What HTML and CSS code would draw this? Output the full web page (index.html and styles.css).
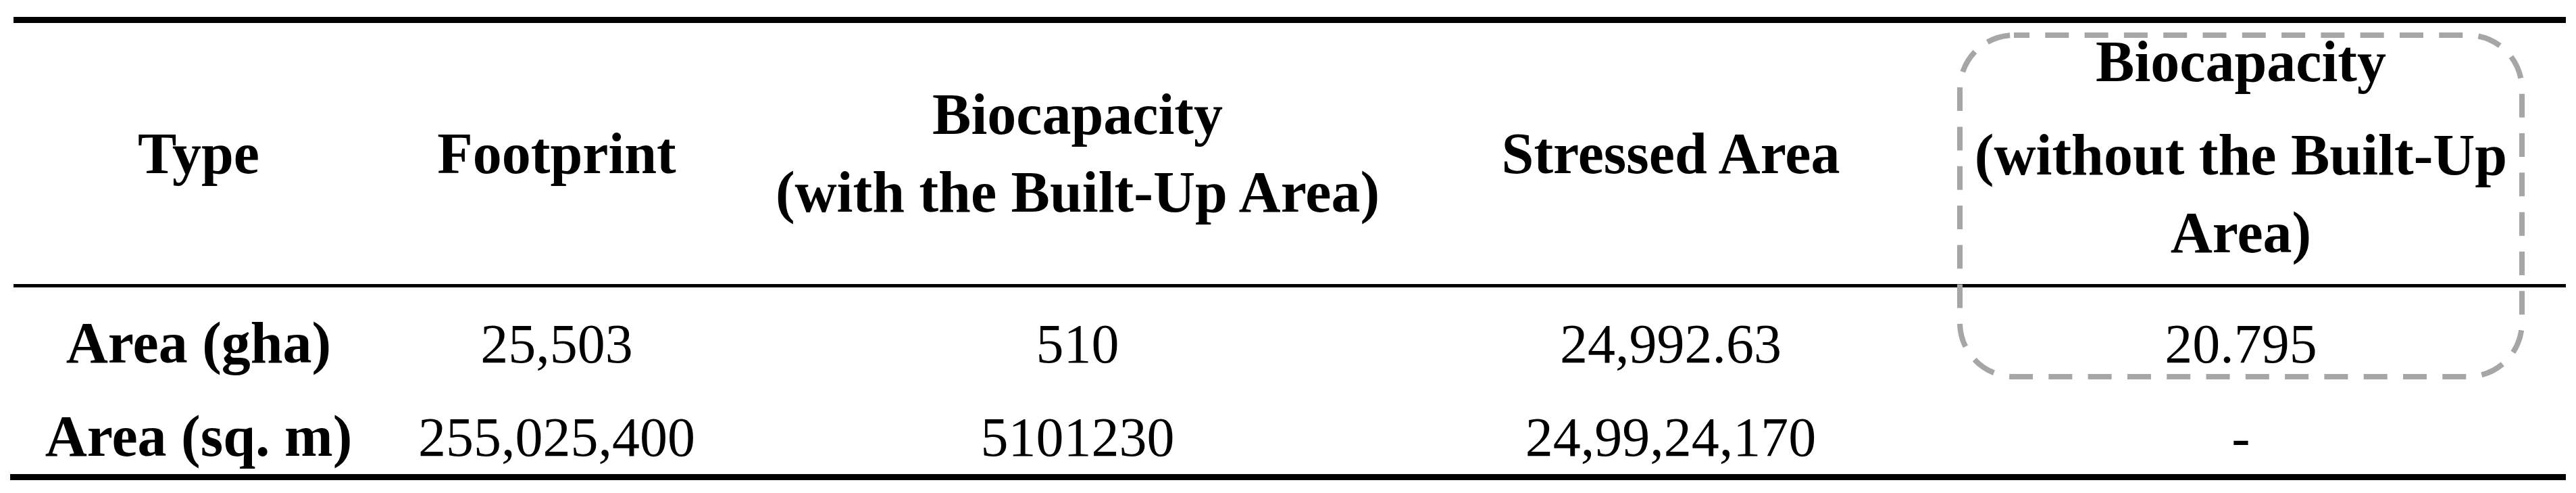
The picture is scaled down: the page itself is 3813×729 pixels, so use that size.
FILE: index.html
```html
<!DOCTYPE html>
<html lang="en">
<head>
<meta charset="utf-8">
<title>Footprint and Biocapacity</title>
<link rel="stylesheet" href="styles.css">
</head>
<body>
<div class="figure">
  <div class="table" role="table">
    <div class="row head" role="row">
      <div class="cell" role="columnheader">Type</div>
      <div class="cell" role="columnheader">Footprint</div>
      <div class="cell" role="columnheader">Biocapacity<br>(with the Built-Up Area)</div>
      <div class="cell" role="columnheader">Stressed Area</div>
      <div class="cell top" role="columnheader"><span class="title">Biocapacity</span>(without the Built-Up<br>Area)</div>
    </div>
    <div class="row data" role="row">
      <div class="cell label" role="rowheader">Area (gha)</div>
      <div class="cell num" role="cell">25,503</div>
      <div class="cell num" role="cell">510</div>
      <div class="cell num" role="cell">24,992.63</div>
      <div class="cell num" role="cell">20.795</div>
    </div>
    <div class="row data" role="row">
      <div class="cell label" role="rowheader">Area (sq. m)</div>
      <div class="cell num" role="cell">255,025,400</div>
      <div class="cell num" role="cell">5101230</div>
      <div class="cell num" role="cell">24,99,24,170</div>
      <div class="cell num" role="cell">-</div>
    </div>
  </div>
  <svg class="highlight" width="840" height="514" viewBox="0 0 840 514" aria-hidden="true">
    <rect x="4" y="4" width="832" height="505" rx="80" ry="80" fill="none" stroke="#a6a6a6" stroke-width="8" stroke-dasharray="35 23.3" stroke-dashoffset="12"/>
  </svg>
</div>
</body>
</html>
```

FILE: styles.css
```css
html, body {
  margin: 0;
  padding: 0;
  background: #ffffff;
}

body {
  color: #000000;
  font-family: "Liberation Serif", "Times New Roman", serif;
}

.figure {
  position: relative;
  margin: 25px 0 0 15px;
  width: 3783px;
  border-bottom: 9px solid #000000;
}

.table {
  margin-left: 5px;
  width: 3778px;
}

.row {
  display: grid;
  grid-template-columns: 548px 512px 1030px 726px 962px;
  text-align: center;
}

.head {
  height: 386px;
  border-top: 9px solid #000000;
  border-bottom: 5px solid #000000;
  align-items: center;
  font-weight: bold;
  font-size: 86px;
  line-height: 115px;
}

.head .top {
  align-self: start;
}

.head .title {
  display: block;
  margin-bottom: 23px;
}

.data {
  height: 138px;
  align-items: baseline;
}

.data .cell {
  padding-top: 26px;
  line-height: 112px;
}

.label {
  font-weight: bold;
  font-size: 86px;
}

.num {
  font-size: 82px;
}

.highlight {
  position: absolute;
  left: 2882px;
  top: 23px;
  display: block;
}
```
